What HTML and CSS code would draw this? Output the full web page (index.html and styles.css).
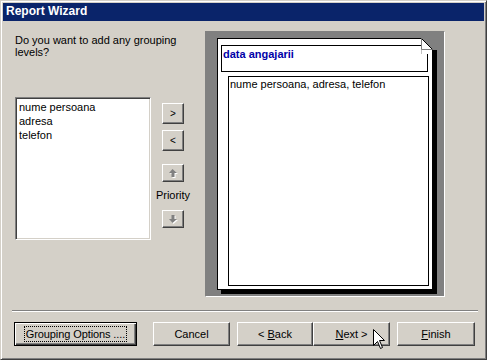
FILE: index.html
```html
<!DOCTYPE html>
<html lang="en">
    <head>
        <title>Report Wizard</title>
        <meta charset="utf-8" />
        <link rel="stylesheet" href="styles.css">
    </head>
    <body>
        <div class="window">
            <div class="titlebar">Report Wizard</div>
            <div class="content">
                <div class="main">
                    <div class="left">
                        <p class="question">Do you want to add any grouping levels?</p>
                        <div class="picker">
                            <div class="listbox">
                                <div class="item">nume persoana</div>
                                <div class="item">adresa</div>
                                <div class="item">telefon</div>
                            </div>
                            <div class="movers">
                                <button class="small add" type="button">&gt;</button>
                                <button class="small remove" type="button">&lt;</button>
                                <button class="small up" type="button">
                                    <svg width="9" height="9" viewBox="0 0 9 9">
                                        <polygon points="4.5,1 9,5 6.5,5 6.5,9 3.5,9 3.5,5 1,5" fill="#fff"/>
                                        <polygon points="3.5,0 8,4 5.5,4 5.5,8 2.5,8 2.5,4 0,4" fill="#808080"/>
                                    </svg>
                                </button>
                                <span class="priority">Priority</span>
                                <button class="small down" type="button">
                                    <svg width="9" height="9" viewBox="0 0 9 9">
                                        <polygon points="4.5,9 9,5 6.5,5 6.5,1 3.5,1 3.5,5 1,5" fill="#fff"/>
                                        <polygon points="3.5,8 8,4 5.5,4 5.5,0 2.5,0 2.5,4 0,4" fill="#808080"/>
                                    </svg>
                                </button>
                            </div>
                        </div>
                    </div>
                    <div class="preview">
                        <div class="page">
                            <svg class="fold" width="16" height="16" viewBox="0 0 16 16">
                                <rect x="0" y="0" width="16" height="16" fill="#808080"/>
                                <polygon points="0.5,0.5 11.5,11.5 11.5,16 0.5,16" fill="#fff"/>
                                <polyline points="0.5,0.5 11.5,11.5 11.5,16" fill="none" stroke="#000"/>
                                <polyline points="0.5,0.5 0.5,11.5 11.5,11.5" fill="none" stroke="#808080"/>
                                <rect x="12" y="12" width="4" height="4" fill="#000"/>
                            </svg>
                            <div class="group-head">data angajarii</div>
                            <div class="detail">nume persoana, adresa, telefon</div>
                        </div>
                    </div>
                </div>
                <div class="separator"></div>
                <div class="actions">
                    <button class="btn default grouping" type="button"><span class="focus">Grouping Options ....</span></button>
                    <button class="btn cancel" type="button">Cancel</button>
                    <button class="btn back" type="button">&lt; <u>B</u>ack</button>
                    <button class="btn next" type="button"><u>N</u>ext &gt;</button>
                    <button class="btn finish" type="button"><u>F</u>inish</button>
                </div>
            </div>
            <svg class="cursor" width="13" height="21" viewBox="0 0 13 21">
                <polygon points="0.5,0.5 0.5,16.5 4.5,12.5 7.5,19.5 9.5,18.5 6.5,11.5 11.5,11.5" fill="#fff" stroke="#000"/>
            </svg>
        </div>
    </body>
</html>
```

FILE: styles.css
```css
body {
    margin: 0;
    background-color: #d4d0c8;
    font-family: "Liberation Sans", Arial, sans-serif;
    font-size: 11px;
    color: black;
}
.window {
    position: relative;
    width: 487px;
    height: 360px;
    box-sizing: border-box;
    border: 1px solid;
    border-color: #d4d0c8 #404040 #404040 #d4d0c8;
    box-shadow: inset 1px 1px #fff, inset -1px -1px #808080;
    padding: 2px;
    background-color: #d4d0c8;
}
.titlebar {
    height: 18px;
    line-height: 17px;
    padding-left: 3px;
    background-color: #0a246a;
    color: white;
    font-weight: bold;
    font-size: 12px;
}
.content { padding: 0 9px 0 12px; }
.main { display: flex; margin-top: 10px; }
.left { width: 190px; padding-top: 3px; }
.question { margin: 0; line-height: 12px; width: 170px; }
.picker { display: flex; margin-top: 39px; }
.listbox {
    width: 136px;
    height: 143px;
    box-sizing: border-box;
    background: white;
    border: 1px solid;
    border-color: #808080 #fff #fff #808080;
    box-shadow: inset 1px 1px #404040, inset -1px -1px #d4d0c8;
    padding: 2px 3px;
}
.item { line-height: 14px; }
.movers {
    width: 36px;
    margin-left: 4px;
    display: flex;
    flex-direction: column;
    align-items: center;
    padding-top: 6px;
}
.small {
    width: 22px;
    height: 21px;
    padding: 0;
    font-family: inherit;
    font-size: 10px;
    background-color: #d4d0c8;
    border: 1px solid;
    border-color: #fff #404040 #404040 #fff;
    box-shadow: inset -1px -1px #808080;
    display: flex;
    align-items: center;
    justify-content: center;
    color: black;
}
.remove { margin-top: 6px; }
.up { margin-top: 13px; height: 18px; }
.down { height: 18px; }
.priority { line-height: 14px; margin: 6px 0 8px; }
.preview {
    width: 240px;
    height: 266px;
    box-sizing: border-box;
    border: 1px solid;
    border-color: #808080 #fff #fff #808080;
    background-color: #808080;
    padding: 6px 0 0 11px;
}
.page {
    position: relative;
    width: 216px;
    height: 252px;
    box-sizing: border-box;
    border: 1px solid #000;
    background: white;
    box-shadow: 4px 4px 0 #000;
    padding: 6px 0 0 3px;
}
.fold { position: absolute; top: -1px; right: -5px; }
.group-head {
    width: 207px;
    height: 27px;
    box-sizing: border-box;
    border: 1px solid #000;
    color: #0000a8;
    font-weight: bold;
    padding: 2px 1px;
    line-height: 13px;
}
.detail {
    width: 201px;
    height: 210px;
    box-sizing: border-box;
    border: 1px solid #000;
    margin: 4px 0 0 7px;
    padding: 1px 1px;
    line-height: 13px;
}
.separator {
    height: 0;
    margin: 13px -3px 0 -3px;
    border-top: 1px solid #808080;
    border-bottom: 1px solid #fff;
}
.actions { display: flex; margin-top: 10px; }
.btn {
    height: 24px;
    padding: 0;
    font-family: inherit;
    font-size: 11px;
    color: black;
    background-color: #d4d0c8;
    border: 1px solid;
    border-color: #fff #404040 #404040 #fff;
    box-shadow: inset -1px -1px #808080;
    white-space: nowrap;
}
.btn.default {
    border: 1px solid #000;
    box-shadow: inset 1px 1px #fff, inset -1px -1px #404040, inset -2px -2px #808080;
}
.focus { border: 1px dotted #000; padding: 1px 1px; letter-spacing: -0.1px; }
.grouping { width: 123px; margin-left: -1px; }
.cancel { width: 77px; margin-left: 16px; }
.back { width: 76px; margin-left: 7px; }
.next { width: 77px; }
.finish { width: 78px; margin-left: 7px; }
.cursor { position: absolute; left: 372px; top: 328px; }
```
